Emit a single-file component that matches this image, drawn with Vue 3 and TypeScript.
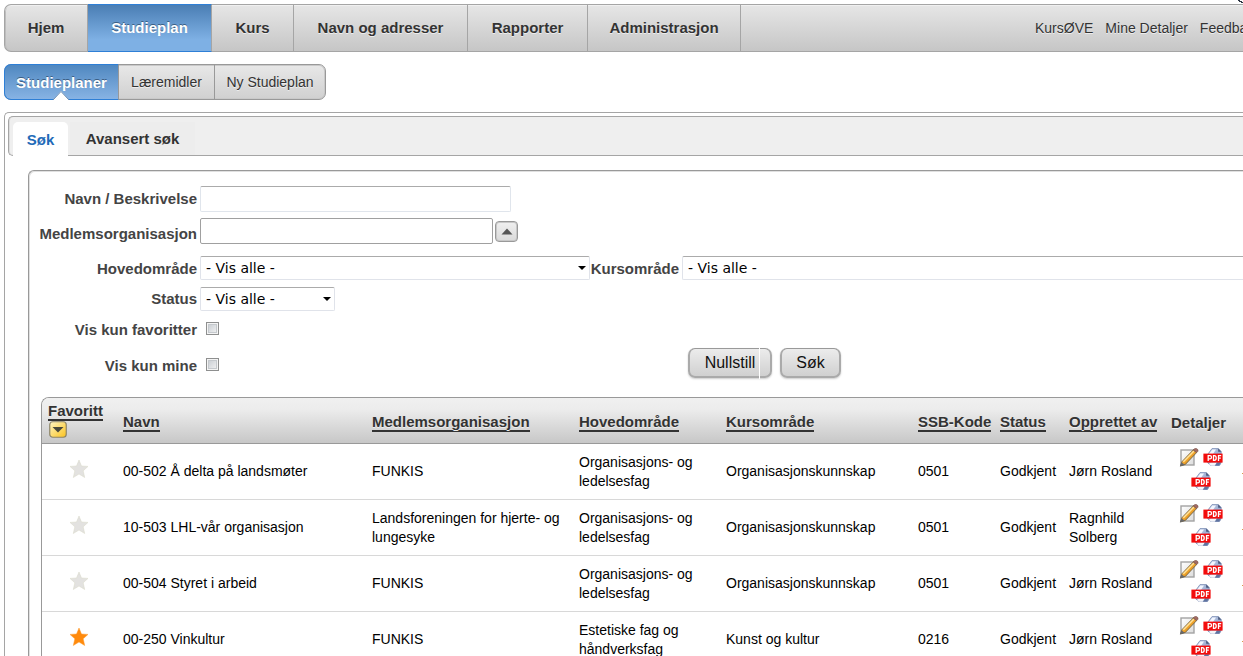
<script setup lang="ts">
import { ref } from 'vue'

interface MenuItem {
  label: string
  size: string
  active?: boolean
}
interface Plan {
  name: string
  org: string
  area: string
  course: string
  code: string
  status: string
  author: string
  favourite: boolean
}

const mainMenu: MenuItem[] = [
  { label: 'Hjem', size: 'w-hjem' },
  { label: 'Studieplan', size: 'w-plan', active: true },
  { label: 'Kurs', size: 'w-kurs' },
  { label: 'Navn og adresser', size: 'w-navn' },
  { label: 'Rapporter', size: 'w-rapp' },
  { label: 'Administrasjon', size: 'w-admin' },
]
const userLinks = ['KursØVE', 'Mine Detaljer', 'Feedback']
const subMenu: MenuItem[] = [
  { label: 'Studieplaner', size: 's-planer', active: true },
  { label: 'Læremidler', size: 's-midler' },
  { label: 'Ny Studieplan', size: 's-ny' },
]
const headers = ['Navn', 'Medlemsorganisasjon', 'Hovedområde', 'Kursområde', 'SSB-Kode', 'Status', 'Opprettet av']

const plans: Plan[] = [
  { name: '00-502 Å delta på landsmøter', org: 'FUNKIS', area: 'Organisasjons- og ledelsesfag', course: 'Organisasjonskunnskap', code: '0501', status: 'Godkjent', author: 'Jørn Rosland', favourite: false },
  { name: '10-503 LHL-vår organisasjon', org: 'Landsforeningen for hjerte- og lungesyke', area: 'Organisasjons- og ledelsesfag', course: 'Organisasjonskunnskap', code: '0501', status: 'Godkjent', author: 'Ragnhild Solberg', favourite: false },
  { name: '00-504 Styret i arbeid', org: 'FUNKIS', area: 'Organisasjons- og ledelsesfag', course: 'Organisasjonskunnskap', code: '0501', status: 'Godkjent', author: 'Jørn Rosland', favourite: false },
  { name: '00-250 Vinkultur', org: 'FUNKIS', area: 'Estetiske fag og håndverksfag', course: 'Kunst og kultur', code: '0216', status: 'Godkjent', author: 'Jørn Rosland', favourite: true },
]

const name = ref('')
const organisation = ref('')
const onlyFavourites = ref(false)
const onlyMine = ref(false)
</script>

<template>
  <div class="page">
    <svg class="defs" aria-hidden="true">
      <defs>
        <linearGradient id="pencil-body" x1="0" y1="0" x2="1" y2="1">
          <stop offset="0" stop-color="#ffd77a" />
          <stop offset="0.5" stop-color="#f3a52c" />
          <stop offset="1" stop-color="#8a6420" />
        </linearGradient>
        <linearGradient id="sheet" x1="0" y1="0" x2="1" y2="1">
          <stop offset="0" stop-color="#ffffff" />
          <stop offset="1" stop-color="#dcdcdc" />
        </linearGradient>
        <linearGradient id="pdf-sheet" x1="0" y1="0" x2="1" y2="1">
          <stop offset="0" stop-color="#c9d6ee" />
          <stop offset="1" stop-color="#7489b8" />
        </linearGradient>
        <symbol id="icon-pencil" viewBox="0 0 20 19">
          <rect x="2" y="2" width="13" height="15" fill="url(#sheet)" stroke="#a3a3a3" stroke-width="1.4" />
          <path d="M3 13.6 L14.4 1.8 L17.6 4.6 L6.4 16.4 L1.5 18 Z" fill="url(#pencil-body)" stroke="#65583c" stroke-width="0.8" />
          <path d="M4.4 13.8 L15 3" stroke="#ffe39a" stroke-width="1.4" />
          <path d="M14.2 2 L15.8 0.4 L17.4 0.4 L19 1.8 L19 3.2 L17.6 4.6 Z" fill="#a06a64" stroke="#765044" stroke-width="0.6" />
          <path d="M0.8 18.4 L2.4 14.2 L5.8 16.8 Z" fill="#66676a" />
        </symbol>
        <symbol id="icon-pdf" viewBox="0 0 20 19">
          <path d="M9 0.6 H15.4 L18.2 3.6 V14.5 L16.6 17.4 H8 L4.8 15 L5 6 Z" fill="url(#pdf-sheet)" stroke="#7a8bb2" stroke-width="0.8" />
          <path d="M9.4 1.4 H13 L10 6 H6 Z" fill="#f2f6ff" />
          <path d="M15.2 0.6 V3.8 H18.2 Z" fill="#465578" />
          <path d="M8 14.5 H14 L11.6 17.8 H8.4 L5.8 16 Z" fill="#f4f5fa" />
          <path d="M14 14.5 H17.6 L16 17.4 H12.2 Z" fill="#5f739f" />
          <rect x="0.4" y="5.6" width="19.2" height="9" fill="#f20c0c" />
          <path d="M5.2 13 V7.6 H7 Q8.5 7.6 8.5 9.2 Q8.5 10.8 7 10.8 H5.2 M10.5 7.6 V12.4 H11.4 Q13.2 12.4 13.2 10 Q13.2 7.6 11.4 7.6 Z M15.5 13 V7.6 H18.2 M15.5 10.2 H17.8" fill="none" stroke="#fff" stroke-width="1.3" />
        </symbol>
      </defs>
    </svg>
    <svg class="pointer" viewBox="0 0 5 3" aria-hidden="true">
      <path d="M0 0 H2 V1 H4 V2 H5 V3 H3 V2 H1 V1 H0 Z" fill="#2b3442" />
    </svg>

    <header class="main-bar">
      <nav class="main-menu" aria-label="Hovedmeny">
        <a v-for="item in mainMenu" :key="item.label" href="#" :class="[item.size, { active: item.active }]">{{ item.label }}</a>
      </nav>
      <nav class="user-links" aria-label="Bruker">
        <a v-for="link in userLinks" :key="link" href="#">{{ link }}</a>
      </nav>
    </header>

    <nav class="sub-menu" aria-label="Studieplan">
      <a v-for="item in subMenu" :key="item.label" href="#" :class="[item.size, { active: item.active }]">{{ item.label }}
        <svg v-if="item.active" class="notch" viewBox="0 0 16 9" aria-hidden="true">
          <path d="M0 9 L8 0 L16 9 Z" fill="#fff" />
          <path d="M0 9 L8 0.5 L16 9" fill="none" stroke="#6f8fb3" stroke-width="1" />
        </svg>
      </a>
    </nav>

    <main class="outer">
      <div class="tabs">
        <a href="#" class="tab selected">Søk</a>
        <a href="#" class="tab">Avansert søk</a>
      </div>

      <section class="panel">
        <form class="search" @submit.prevent>
          <div class="row r-name">
            <label for="f-name">Navn / Beskrivelse</label>
            <input id="f-name" v-model="name" class="text soft" type="text" />
          </div>
          <div class="row r-org">
            <label for="f-org">Medlemsorganisasjon</label>
            <input id="f-org" v-model="organisation" class="text strong" type="text" />
            <button type="button" class="toggle" aria-label="Velg medlemsorganisasjon">
              <svg viewBox="0 0 12 7" aria-hidden="true"><path d="M0.5 6.5 L6 0.5 L11.5 6.5 Z" fill="#555" /></svg>
            </button>
          </div>
          <div class="row r-area">
            <label for="f-area">Hovedområde</label>
            <span class="select wide">
              <select id="f-area"><option>- Vis alle -</option></select>
              <svg viewBox="0 0 8 4" aria-hidden="true"><path d="M0 0 H8 L4 4 Z" /></svg>
            </span>
            <label for="f-course" class="second">Kursområde</label>
            <span class="select rest">
              <select id="f-course"><option>- Vis alle -</option></select>
            </span>
          </div>
          <div class="row r-status">
            <label for="f-status">Status</label>
            <span class="select small">
              <select id="f-status"><option>- Vis alle -</option></select>
              <svg viewBox="0 0 8 4" aria-hidden="true"><path d="M0 0 H8 L4 4 Z" /></svg>
            </span>
          </div>
          <div class="row r-fav">
            <label for="f-fav">Vis kun favoritter</label>
            <input id="f-fav" v-model="onlyFavourites" type="checkbox" />
          </div>
          <div class="row r-mine">
            <label for="f-mine">Vis kun mine</label>
            <input id="f-mine" v-model="onlyMine" type="checkbox" />
            <div class="actions">
              <button type="reset" class="btn reset">Nullstill</button>
              <button type="submit" class="btn">Søk</button>
            </div>
          </div>
        </form>

        <div class="grid">
          <table>
            <colgroup>
              <col class="c-fav" /><col class="c-name" /><col class="c-org" /><col class="c-area" /><col class="c-course" />
              <col class="c-code" /><col class="c-status" /><col class="c-author" /><col class="c-detail" /><col />
            </colgroup>
            <thead>
              <tr>
                <th class="fav-head">
                  <a href="#">Favoritt</a>
                  <svg class="sort" viewBox="0 0 18 17" role="img" aria-label="Synkende">
                    <defs><linearGradient id="gold" x1="0" y1="0" x2="1" y2="1"><stop offset="0" stop-color="#fff6c4" /><stop offset="1" stop-color="#fbc21c" /></linearGradient></defs>
                    <rect x="0.75" y="0.75" width="16.5" height="15.5" rx="3" fill="url(#gold)" stroke="#8c8468" stroke-width="1.2" />
                    <path d="M3.5 6 H14.5 L9 11.5 Z" fill="#4a4a3c" />
                  </svg>
                </th>
                <th v-for="head in headers" :key="head"><a href="#">{{ head }}</a></th>
                <th>Detaljer</th>
                <th></th>
              </tr>
            </thead>
            <tbody>
              <tr v-for="plan in plans" :key="plan.name">
                <td class="fav">
                  <button type="button" class="star" :class="{ on: plan.favourite }" aria-label="Favoritt">
                    <svg viewBox="0 0 18 18" aria-hidden="true"><path d="M9 0 L11.5 6 L18 6.4 L13.2 10.8 L14.7 17.5 L9 14 L3.3 17.5 L4.8 10.8 L0 6.4 L6.5 6 Z" /></svg>
                  </button>
                </td>
                <td>{{ plan.name }}</td>
                <td>{{ plan.org }}</td>
                <td>{{ plan.area }}</td>
                <td>{{ plan.course }}</td>
                <td>{{ plan.code }}</td>
                <td>{{ plan.status }}</td>
                <td>{{ plan.author }}</td>
                <td class="detail">
                  <div class="icons">
                    <a href="#" aria-label="Rediger"><svg><use href="#icon-pencil" /></svg></a>
                    <a href="#" aria-label="PDF"><svg><use href="#icon-pdf" /></svg></a>
                    <a href="#" aria-label="PDF"><svg><use href="#icon-pdf" /></svg></a>
                  </div>
                </td>
                <td class="next"><span class="mark"></span></td>
              </tr>
            </tbody>
          </table>
        </div>
      </section>
    </main>
  </div>
</template>

<style>
body {
  margin: 0;
  overflow: hidden;
  background: #fff;
}
</style>

<style scoped>
.page {
  box-sizing: border-box;
  position: relative;
  height: 100vh;
  overflow: hidden;
  padding: 4px 0 0 4px;
  font: 14px/19px "Liberation Sans", Arial, sans-serif;
  color: #000;
}
.page *,
.page *::after {
  box-sizing: border-box;
}
.defs {
  position: absolute;
  width: 0;
  height: 0;
}
.pointer {
  position: absolute;
  top: 0;
  right: 0;
  width: 5px;
  height: 3px;
}
a {
  color: inherit;
  text-decoration: none;
}
.main-bar {
  display: flex;
  justify-content: space-between;
  height: 48px;
  border: 1px solid #a5a5a5;
  border-right: 0;
  border-radius: 7px 0 0 7px;
  background: linear-gradient(#e6e6e6, #c6c6c6);
  box-shadow: inset 0 1px #f0f0f0, inset 1px 0 #bdbdbd;
  color: #333;
  text-shadow: 0 1px #eee;
}
.main-menu {
  display: flex;
  font-size: 15px;
  font-weight: bold;
}
.main-menu a {
  display: flex;
  align-items: center;
  justify-content: center;
  padding-bottom: 2px;
  border-right: 1px solid #a5a5a5;
}
.w-hjem { width: 83px; }
.w-plan { width: 124px; }
.w-kurs { width: 82px; }
.w-navn { width: 174px; }
.w-rapp { width: 120px; }
.w-admin { width: 153px; }
.main-menu a.active {
  margin: -1px 0;
  border-top: 1px solid #2e7fd6;
  border-bottom: 1px solid #2e7fd6;
  background: linear-gradient(#4a7eb4, #7eb0e4 75%);
  color: #fff;
  text-shadow: 0 -1px #3c5f84;
}
.user-links {
  display: flex;
  align-items: center;
  gap: 12px;
  width: 208px;
  white-space: nowrap;
}
.sub-menu {
  display: flex;
  width: max-content;
  height: 36px;
  margin-top: 12px;
  border: 1px solid #999;
  border-radius: 7px;
  background: linear-gradient(#e8e8e8, #d0d0d0);
  box-shadow: inset 0 0 0 1px #c9c9c9;
  color: #333;
}
.sub-menu a {
  position: relative;
  display: flex;
  align-items: center;
  justify-content: center;
  border-right: 1px solid #999;
  text-shadow: 0 1px #eee;
}
.sub-menu a:last-child {
  border-right: 0;
}
.s-planer { width: 115px; }
.s-midler { width: 96px; }
.s-ny { width: 110px; }
.sub-menu a.active {
  margin: -1px 0 -1px -1px;
  border: 1px solid #2e7fd6;
  border-right-color: #999;
  border-radius: 7px 0 0 7px;
  background: linear-gradient(#5088c0, #87b3e4);
  color: #fff;
  font-size: 15px;
  font-weight: bold;
  text-shadow: 0 -1px #3c5f84;
}
.notch {
  position: absolute;
  left: 50%;
  bottom: -1px;
  width: 16px;
  height: 9px;
  margin-left: -9px;
}
.outer {
  margin-top: 12px;
  padding: 3px 0 0 3px;
  border: 1px solid #a5a5a5;
  border-width: 1px 0 0 1px;
  border-radius: 5px 0 0 0;
}
.tabs {
  display: flex;
  align-items: flex-end;
  height: 40px;
  padding-left: 4px;
  border: 1px solid #a5a5a5;
  border-right: 0;
  border-radius: 5px 0 0 5px;
  background: #efefef;
  box-shadow: inset 1px 0 #ddd;
  font-size: 15px;
  font-weight: bold;
  color: #333;
}
.tab {
  display: flex;
  align-items: center;
  justify-content: center;
  width: 125px;
  height: 33px;
  margin-left: 2px;
  background: #ededed;
}
.tab.selected {
  width: 55px;
  height: 34px;
  margin: 0 0 -1px;
  border-radius: 5px 5px 0 0;
  background: #fff;
  color: #1f6bb8;
}
.panel {
  margin: 14px 0 0 20px;
  padding: 11px 0 0 12px;
  border: 1px solid #999;
  border-width: 1px 0 0 1px;
  border-radius: 6px 0 0 0;
  box-shadow: inset 1px 1px #e0e0e0;
}
.row {
  display: flex;
  align-items: center;
}
.r-name { height: 33px; }
.r-org { height: 36px; }
.r-area { height: 34px; }
.r-status { height: 27px; }
.r-fav { height: 34px; }
.r-mine { height: 38px; }
.row label {
  display: flex;
  flex: none;
  justify-content: flex-end;
  width: 156px;
  white-space: nowrap;
  font-size: 15px;
  font-weight: bold;
  color: #444;
}
.row label.second {
  width: 89px;
}
.text,
.select {
  flex: none;
  margin-left: 3px;
}
.text {
  height: 26px;
  border-radius: 2px;
  background: #fff;
}
.soft {
  width: 311px;
  border: 1px solid #e0e5ec;
  border-top-color: #ababab;
}
.strong {
  width: 293px;
  margin-bottom: 4px;
  border: 1px solid #a0a0a0;
}
.toggle {
  display: flex;
  align-items: center;
  justify-content: center;
  width: 23px;
  height: 21px;
  margin: 0 0 3px 2px;
  padding: 0;
  border: 1px solid #999;
  border-radius: 4px;
  background: linear-gradient(#f0f0f0, #dadada);
  box-shadow: inset 0 0 0 1px #c8c8c8;
}
.toggle svg {
  width: 12px;
  height: 7px;
}
.select {
  position: relative;
}
.select select {
  display: block;
  appearance: none;
  width: 100%;
  height: 24px;
  padding: 0 5px;
  border: 1px solid #e0e3ea;
  border-top-color: #ababab;
  border-radius: 2px;
  background: #fff;
  color: #000;
  font: 14px/20px "DejaVu Sans", Verdana, sans-serif;
}
.select svg {
  position: absolute;
  right: 4px;
  top: 10px;
  width: 8px;
  height: 4px;
  pointer-events: none;
}
.wide { width: 390px; }
.small { width: 135px; }
.rest {
  flex: 1;
}
.rest select {
  border-right: 0;
  border-radius: 2px 0 0 2px;
}
input[type="checkbox"] {
  appearance: none;
  flex: none;
  width: 13px;
  height: 13px;
  margin: 0 0 2px 9px;
  border: 1px solid #8e8f8f;
  background: linear-gradient(135deg, #c3c8ce, #f6f6f6);
  box-shadow: inset 0 0 0 1px #f4f4f4, inset 0 0 0 2px #c5c9cd;
}
input[type="checkbox"]:checked {
  background: #4a7eb4;
}
.actions {
  display: flex;
  gap: 8px;
  margin: 0 0 4px 469px;
}
.btn {
  position: relative;
  width: 61px;
  height: 30px;
  padding: 0;
  border: 2px solid #aaa;
  border-top: 1px solid #999;
  border-radius: 7px;
  background: linear-gradient(#ececec, #d0d0d0);
  box-shadow: 0 1px 2px #ccc;
  font: 16px/20px "Liberation Sans", Arial, sans-serif;
  color: #111;
}
.btn.reset {
  width: 84px;
}
.btn.reset::after {
  content: "";
  position: absolute;
  top: -1px;
  bottom: -3px;
  right: 10px;
  width: 1px;
  background: #fff;
}
.grid {
  margin-top: 13px;
  overflow: hidden;
  border: 1px solid #999;
  border-width: 1px 0 0 1px;
  border-radius: 8px 0 0 0;
}
table {
  width: 100%;
  table-layout: fixed;
  border-collapse: separate;
  border-spacing: 0;
}
.c-fav { width: 75px; }
.c-name { width: 249px; }
.c-org { width: 207px; }
.c-area { width: 147px; }
.c-course { width: 192px; }
.c-code { width: 82px; }
.c-status { width: 69px; }
.c-author { width: 102px; }
.c-detail { width: 70px; }
thead tr {
  background: linear-gradient(#f0f0f0, #ececec 25%, #c6c6c6);
}
th {
  height: 46px;
  padding: 3px 0 0 6px;
  border-bottom: 1px solid #999;
  text-align: left;
  white-space: nowrap;
  font-size: 15px;
  line-height: 17px;
  color: #333;
  text-shadow: 0 1px #eee;
}
th a {
  display: inline-block;
  border-bottom: 2px solid #333;
  line-height: 16px;
}
.fav-head {
  padding-top: 0;
}
.fav-head a {
  display: table;
}
.sort {
  display: block;
  width: 18px;
  height: 17px;
  margin-left: 1px;
}
td {
  height: 56px;
  padding: 0 2px 0 6px;
  border-bottom: 1px solid #d8d8d8;
}
.fav {
  padding: 0 2px 6px 0;
}
.star {
  display: block;
  margin: 0 auto;
  padding: 0;
  border: 0;
  background: none;
}
.star svg {
  display: block;
  width: 18px;
  height: 18px;
  fill: #e3e2e0;
  stroke: #d8d8c6;
  stroke-width: 0.5;
}
.star.on svg {
  fill: #ff8a0c;
  stroke: #ff9c30;
}
.detail {
  padding: 0 0 4px 6px;
}
.icons {
  display: flex;
  flex-wrap: wrap;
  justify-content: center;
  gap: 5px 4px;
  width: 60px;
}
.icons svg {
  display: block;
  width: 20px;
  height: 19px;
}
.next {
  padding: 3px 0 0 7px;
}
.mark {
  display: block;
  height: 1px;
  background: #d89a4a;
}
</style>
